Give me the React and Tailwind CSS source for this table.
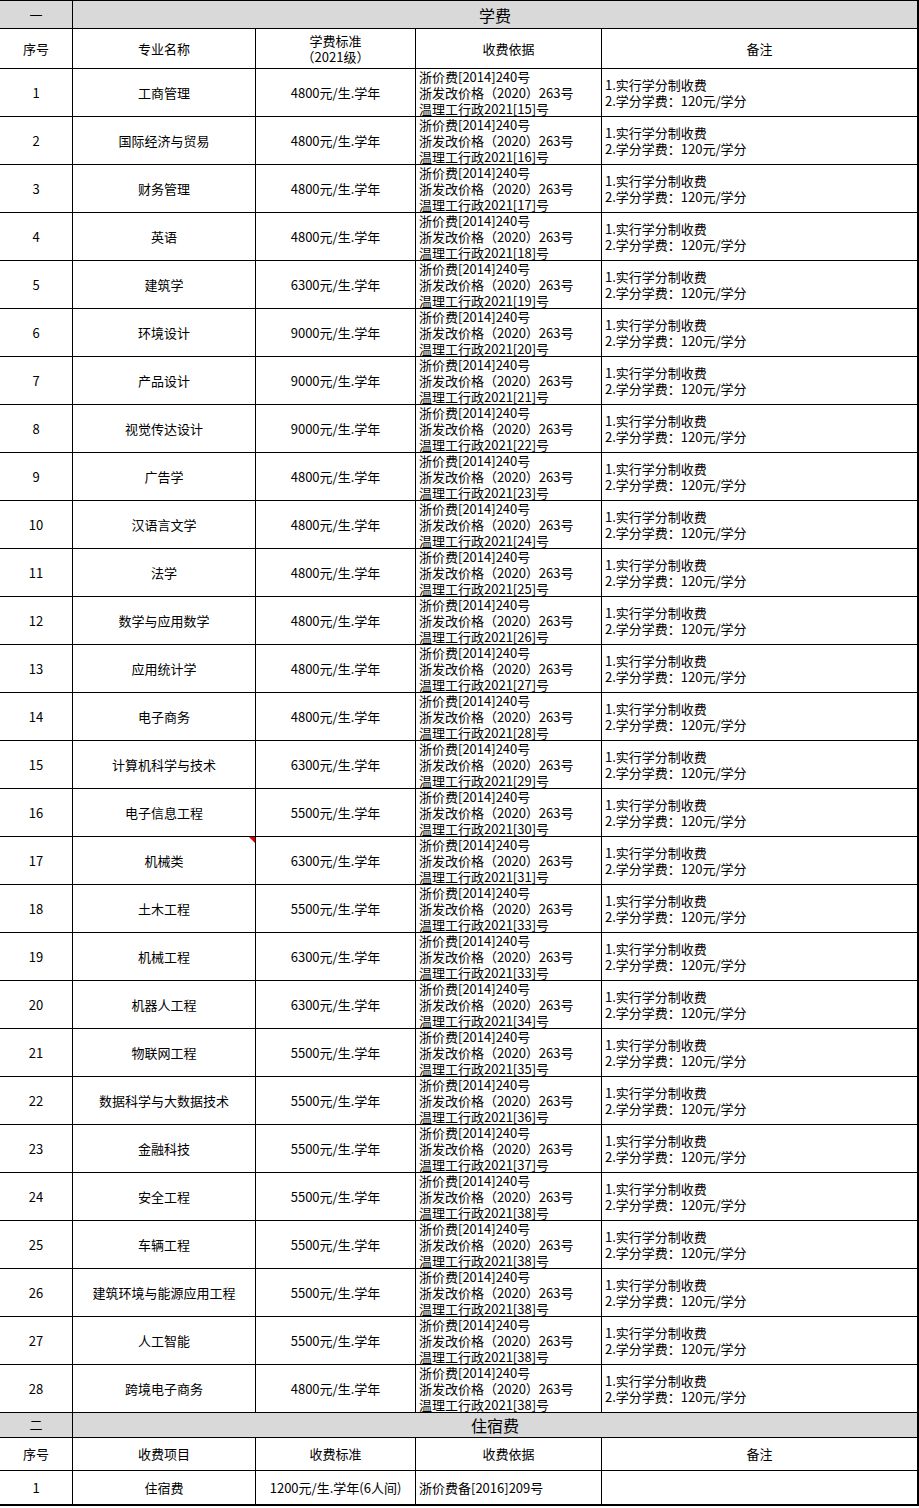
const majors = [
  ['工商管理', '4800', 15],
  ['国际经济与贸易', '4800', 16],
  ['财务管理', '4800', 17],
  ['英语', '4800', 18],
  ['建筑学', '6300', 19],
  ['环境设计', '9000', 20],
  ['产品设计', '9000', 21],
  ['视觉传达设计', '9000', 22],
  ['广告学', '4800', 23],
  ['汉语言文学', '4800', 24],
  ['法学', '4800', 25],
  ['数学与应用数学', '4800', 26],
  ['应用统计学', '4800', 27],
  ['电子商务', '4800', 28],
  ['计算机科学与技术', '6300', 29],
  ['电子信息工程', '5500', 30],
  ['机械类', '6300', 31],
  ['土木工程', '5500', 33],
  ['机械工程', '6300', 33],
  ['机器人工程', '6300', 34],
  ['物联网工程', '5500', 35],
  ['数据科学与大数据技术', '5500', 36],
  ['金融科技', '5500', 37],
  ['安全工程', '5500', 38],
  ['车辆工程', '5500', 38],
  ['建筑环境与能源应用工程', '5500', 38],
  ['人工智能', '5500', 38],
  ['跨境电子商务', '4800', 38],
]

const center = 'bg-white flex items-center justify-center text-center'
const left = 'bg-white flex flex-col justify-center pl-[3px] leading-[16px] overflow-visible'

function SectionRow({ num, title, h }) {
  return (
    <>
      <div className={`bg-[#d9d9d9] flex items-center justify-center ${h}`}>{num}</div>
      <div className={`col-span-4 bg-[#d9d9d9] flex items-center justify-center text-[16px] ${h}`}>{title}</div>
    </>
  )
}

function MajorRow({ i, name, fee, doc }) {
  return (
    <>
      <div className={`${center} h-[47px]`}>{i}</div>
      <div className={`${center} h-[47px] relative`}>
        {name}
        {i === 17 && (
          <span className="absolute top-0 right-0 w-0 h-0 border-l-[6px] border-l-transparent border-t-[6px] border-t-[#e00000]" />
        )}
      </div>
      <div className={`${center} h-[47px]`}>{fee}元/生.学年</div>
      <div className={`${left} h-[47px]`}>
        <div>浙价费[2014]240号</div>
        <div>浙发改价格（2020）263号</div>
        <div>温理工行政2021[{doc}]号</div>
      </div>
      <div className={`${left} h-[47px]`}>
        <div>1.实行学分制收费</div>
        <div>2.学分学费：120元/学分</div>
      </div>
    </>
  )
}

export default function App() {
  return (
    <div className="w-[919px] h-[1508px] bg-white text-black text-[13px] font-['Noto_Sans_CJK_SC',sans-serif]">
      <div className="grid grid-cols-[72px_182px_159px_185px_315px] gap-px bg-black border-t border-r-2 border-b-2 border-black">
        <SectionRow num="一" title="学费" h="h-[27px]" />

        <div className={`${center} h-[39px]`}>序号</div>
        <div className={`${center} h-[39px]`}>专业名称</div>
        <div className={`${center} h-[39px] leading-[16px]`}>
          学费标准<br />（2021级）
        </div>
        <div className={`${center} h-[39px]`}>收费依据</div>
        <div className={`${center} h-[39px]`}>备注</div>

        {majors.map(([name, fee, doc], idx) => (
          <MajorRow key={idx} i={idx + 1} name={name} fee={fee} doc={doc} />
        ))}

        <SectionRow num="二" title="住宿费" h="h-[24px]" />

        <div className={`${center} h-[32px]`}>序号</div>
        <div className={`${center} h-[32px]`}>收费项目</div>
        <div className={`${center} h-[32px]`}>收费标准</div>
        <div className={`${center} h-[32px]`}>收费依据</div>
        <div className={`${center} h-[32px]`}>备注</div>

        <div className={`${center} h-[33px]`}>1</div>
        <div className={`${center} h-[33px]`}>住宿费</div>
        <div className={`${center} h-[33px]`}>1200元/生.学年(6人间)</div>
        <div className={`bg-white flex items-center pl-[3px] h-[33px]`}>浙价费备[2016]209号</div>
        <div className="bg-white h-[33px]" />
      </div>
    </div>
  )
}
